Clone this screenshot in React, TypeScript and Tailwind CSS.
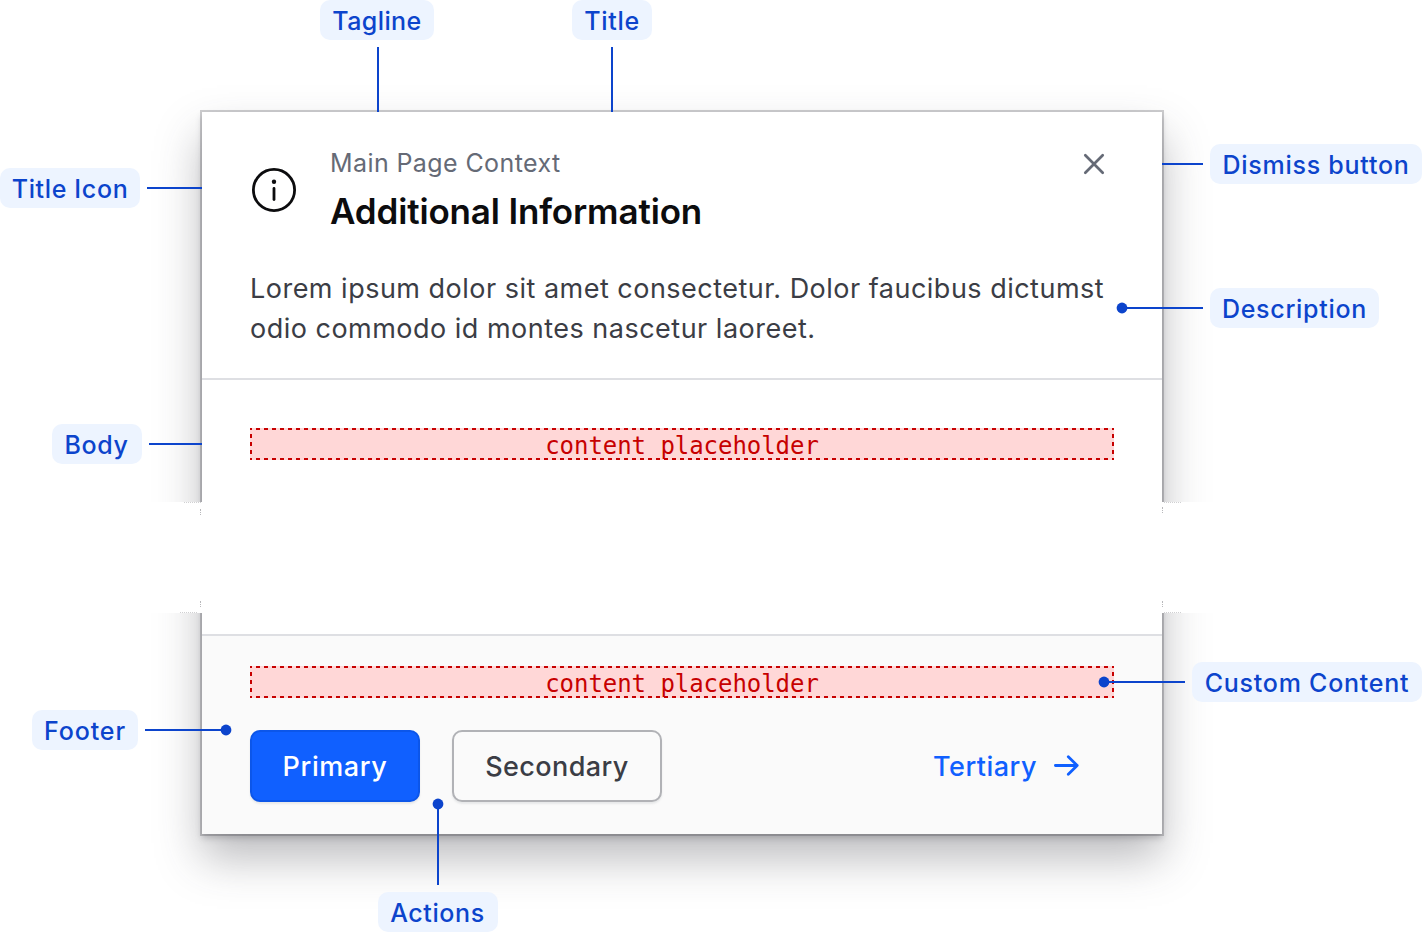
type LabelProps = { text: string; box: string; tracking: string };

const labels: LabelProps[] = [
  { text: "Tagline", box: "left-[320px] top-0 w-[114px]", tracking: "tracking-[0.4px]" },
  { text: "Title", box: "left-[572px] top-0 w-[80px]", tracking: "tracking-[0.7px]" },
  { text: "Title Icon", box: "left-0 top-[168px] w-[140px]", tracking: "tracking-[0.65px]" },
  { text: "Dismiss button", box: "left-[1210px] top-[144px] w-[212px]", tracking: "tracking-[0.75px]" },
  { text: "Description", box: "left-[1210px] top-[288px] w-[169px]", tracking: "tracking-[0.7px]" },
  { text: "Body", box: "left-[52px] top-[424px] w-[90px] pr-px", tracking: "tracking-[0.6px]" },
  { text: "Custom Content", box: "left-[1192px] top-[662px] w-[230px]", tracking: "tracking-[0.75px]" },
  { text: "Footer", box: "left-[32px] top-[710px] w-[106px]", tracking: "tracking-[0.9px]" },
  { text: "Actions", box: "left-[378px] top-[892px] w-[120px] pr-px", tracking: "tracking-[0.6px]" },
];

const connectors = [
  "left-[377px] top-[47px] h-[65px] w-0.5",
  "left-[611px] top-[47px] h-[65px] w-0.5",
  "left-[147px] top-[187px] h-0.5 w-[55px]",
  "left-[1162px] top-[163px] h-0.5 w-[41px]",
  "left-[1122px] top-[307px] h-0.5 w-[81px]",
  "left-[149px] top-[443px] h-0.5 w-[53px]",
  "left-[1104px] top-[681px] h-0.5 w-[81px]",
  "left-[145px] top-[729px] h-0.5 w-[81px]",
  "left-[437px] top-[804px] h-[81px] w-0.5",
];

const dots = [
  "left-[1116px] top-[302px]",
  "left-[1098px] top-[676px]",
  "left-[220px] top-[724px]",
  "left-[432px] top-[798px]",
];

const tornEdges = [
  "left-[200px] top-[509px]",
  "left-[1162px] top-[507px]",
  "left-[200px] top-[601px]",
  "left-[1162px] top-[601px]",
];

const tornCorners = [
  "left-[184px] top-[502px]",
  "left-[1164px] top-[502px]",
  "left-[180px] top-[612px]",
  "left-[1164px] top-[612px]",
];

function Label({ text, box, tracking }: LabelProps) {
  return (
    <div
      className={`absolute flex h-10 items-center justify-center rounded-[10px] bg-[#edf4ff] pt-0.5 text-[25px] leading-none font-medium whitespace-nowrap text-[#0c44cc] ${box} ${tracking}`}
    >
      {text}
    </div>
  );
}

function Placeholder() {
  return (
    <div className="flex h-8 items-center justify-center bg-[#ffd7d7] [background-image:repeating-linear-gradient(90deg,#c70000_0_2px,transparent_2px_6px,#c70000_6px_8px),repeating-linear-gradient(90deg,#c70000_0_2px,transparent_2px_6px,#c70000_6px_8px),repeating-linear-gradient(180deg,#c70000_0_2px,transparent_2px_6px,#c70000_6px_8px),repeating-linear-gradient(180deg,#c70000_0_2px,transparent_2px_6px,#c70000_6px_8px)] [background-position:0_0,0_100%,0_0,100%_0] [background-repeat:no-repeat] [background-size:100%_2px,100%_2px,2px_100%,2px_100%]">
      <span className="pt-1 font-['DejaVu_Sans_Mono',monospace] text-[24px] leading-none tracking-[-0.05px] text-[#c70000]">
        content placeholder
      </span>
    </div>
  );
}

export default function App() {
  return (
    <div className="relative h-[932px] w-[1422px] overflow-hidden bg-white pt-[112px] pl-[202px] font-['Inter',sans-serif]">
      <section className="flex h-[722px] w-[960px] flex-col bg-white shadow-[0_0_0_2px_#3b3d4540,0_4px_6px_0_#3b3d4540,0_24px_42px_0_#3b3d4559]">
        <header className="h-[268px] border-b-2 border-[#dedfe3] px-12 pt-8">
          <div className="flex items-start">
            <svg className="mt-6 size-12" viewBox="0 0 48 48" fill="none">
              <circle cx="24" cy="22" r="20.6" stroke="#0c0c0e" strokeWidth="2.8" />
              <circle cx="24" cy="13.8" r="2.2" fill="#0c0c0e" />
              <path d="M24 20.5v11" stroke="#0c0c0e" strokeWidth="2.8" strokeLinecap="round" />
            </svg>
            <div className="ml-8 flex-1">
              <p className="pt-[3px] text-[25px] leading-[32px] tracking-[0.4px] text-[#656a76]">Main Page Context</p>
              <h1 className="mt-2 text-[35px] leading-[48px] font-semibold tracking-[-0.15px] text-[#0c0c0e]">
                Additional Information
              </h1>
            </div>
            <button className="mt-2 mr-2" aria-label="Dismiss">
              <svg className="size-6" viewBox="0 0 24 24" fill="none" stroke="#656a76" strokeWidth="2.7" strokeLinecap="round">
                <path d="M3.3 3.3l17.4 17.4M20.7 3.3L3.3 20.7" />
              </svg>
            </button>
          </div>
          <p className="mt-[34px] text-[27px] leading-10 tracking-[0.49px] whitespace-nowrap text-[#3b3d45]">
            Lorem ipsum dolor sit amet consectetur. Dolor faucibus dictumst
            <br />
            odio commodo id montes nascetur laoreet.
          </p>
        </header>
        <main className="flex-1 px-12 pt-12">
          <Placeholder />
        </main>
        <footer className="h-[200px] border-t-2 border-[#dedfe3] bg-[#fafafa] px-12 pt-[30px]">
          <Placeholder />
          <div className="mt-8 flex h-[72px] items-center">
            <button className="h-[72px] w-[170px] rounded-[10px] border-2 border-[#0c56e9] bg-[#1060ff] pt-0.5 text-[27px] font-[450] tracking-[0.6px] text-white shadow-[0_2px_2px_0_#656a761f]">
              Primary
            </button>
            <button className="ml-8 h-[72px] w-[210px] rounded-[10px] border-2 border-[#b1b2b6] bg-[#fafafa] pt-0.5 text-[27px] font-medium tracking-[0.4px] text-[#3b3d45] shadow-[0_2px_2px_0_#656a761f]">
              Secondary
            </button>
            <button className="mr-[35px] ml-auto flex items-center gap-4 text-[27px] font-medium tracking-[0.5px] text-[#1060ff]">
              <span className="pt-0.5">Tertiary</span>
              <svg
                className="h-6 w-[26px]"
                viewBox="0 0 26 24"
                fill="none"
                stroke="#1060ff"
                strokeWidth="2.8"
                strokeLinecap="round"
                strokeLinejoin="round"
              >
                <path d="M2.4 11.5H24.2M15.3 2.7l8.9 8.8-8.9 8.8" />
              </svg>
            </button>
          </div>
        </footer>
      </section>

      <div className="absolute top-[502px] left-0 h-[111px] w-full bg-white" />
      {tornEdges.map((place) => (
        <div key={place} className={`absolute h-1.5 border-l border-dotted border-[#b8b8bb] ${place}`} />
      ))}
      {tornCorners.map((place) => (
        <div key={place} className={`absolute w-[17px] border-t border-dotted border-[#d0d0d2] ${place}`} />
      ))}

      {connectors.map((place) => (
        <div key={place} className={`absolute bg-[#0c44cc] ${place}`} />
      ))}
      {dots.map((place) => (
        <svg key={place} className={`absolute size-3 ${place}`} viewBox="0 0 12 12">
          <circle cx="6" cy="6" r="5.4" fill="#0c44cc" />
        </svg>
      ))}
      {labels.map((label) => (
        <Label key={label.text} {...label} />
      ))}
    </div>
  );
}
